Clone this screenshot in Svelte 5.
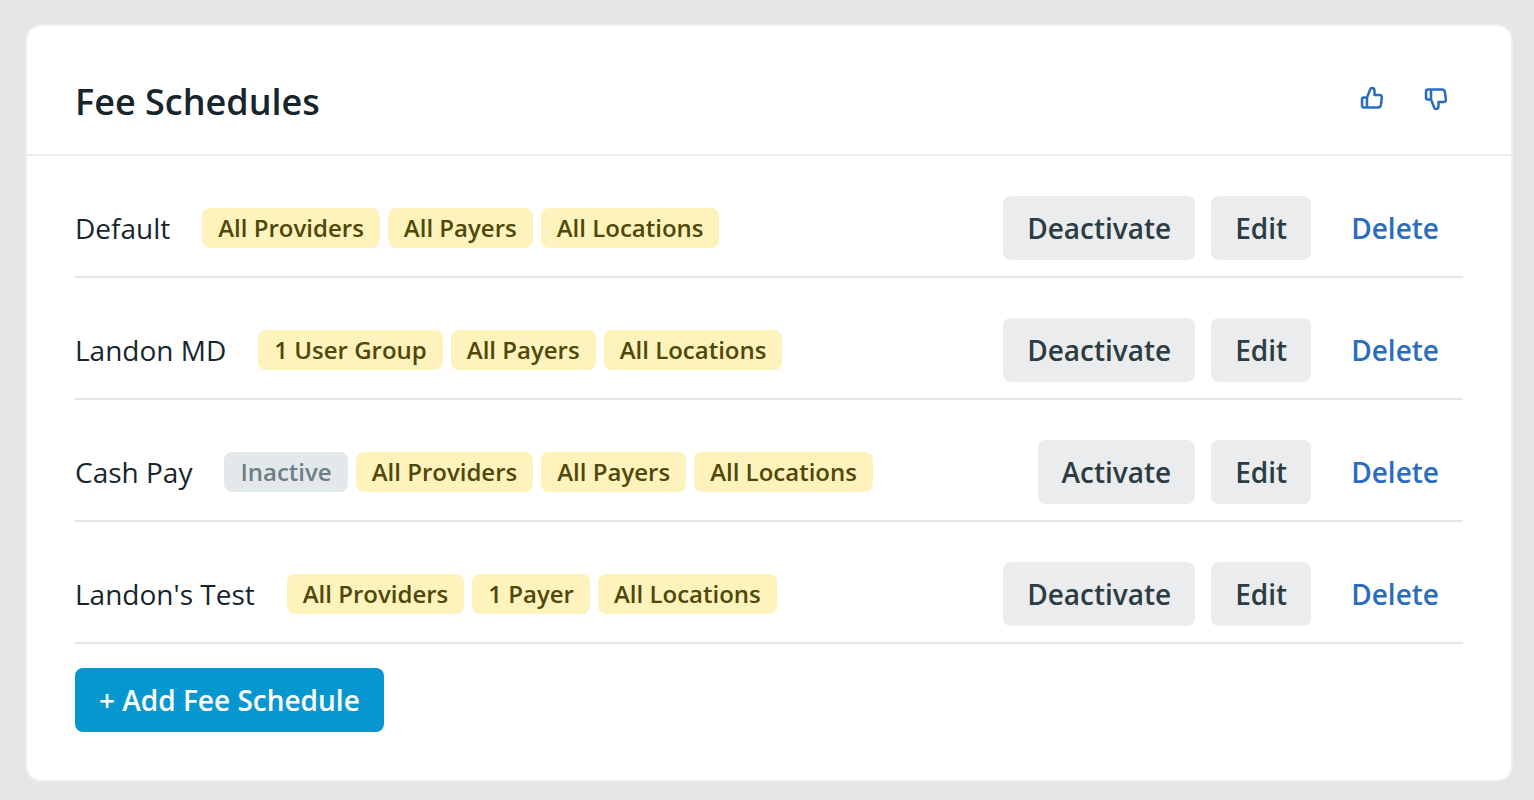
<script>
	const schedules = [
		{ name: 'Default', tags: ['All Providers', 'All Payers', 'All Locations'], active: true },
		{ name: 'Landon MD', tags: ['1 User Group', 'All Payers', 'All Locations'], active: true },
		{ name: 'Cash Pay', tags: ['All Providers', 'All Payers', 'All Locations'], active: false },
		{ name: "Landon's Test", tags: ['All Providers', '1 Payer', 'All Locations'], active: true }
	];
	const thumb = 'M7 11.5 10 4Q10.5 2 12 2 14.5 2 14.5 5V9H19.5Q22.2 9 21.8 12L20.9 19Q20.5 21.500 18 21.500H4Q2 21.500 2 19.500V13.500Q2 11.500 4 11.500H7V21.500';
</script>

<div class="page">
	<section class="card">
		<header class="card-header">
			<h1>Fee Schedules</h1>
			<div class="feedback">
				<button class="icon-btn" aria-label="Thumbs up">
					<svg width="24" height="24" viewBox="0 0 24 24" fill="none" stroke="currentColor" stroke-width="2.5" stroke-linejoin="round" stroke-linecap="round">
						<path d={thumb} />
					</svg>
				</button>
				<button class="icon-btn" aria-label="Thumbs down">
					<svg width="24" height="24" viewBox="0 0 24 24" fill="none" stroke="currentColor" stroke-width="2.5" stroke-linejoin="round" stroke-linecap="round">
						<path d={thumb} transform="matrix(1 0 0 -1 0 25)" />
					</svg>
				</button>
			</div>
		</header>
		<div class="card-body">
			{#each schedules as item}
				<div class="row">
					<span class="name">{item.name}</span>
					<div class="tags">
						{#if !item.active}
							<span class="tag inactive">Inactive</span>
						{/if}
						{#each item.tags as tag}
							<span class="tag">{tag}</span>
						{/each}
					</div>
					<div class="actions">
						<button class="btn">{item.active ? 'Deactivate' : 'Activate'}</button>
						<button class="btn">Edit</button>
						<button class="btn link">Delete</button>
					</div>
				</div>
			{/each}
			<button class="btn primary">+ Add Fee Schedule</button>
		</div>
	</section>
</div>

<style>
	:global(body) {
		background: #e6e6e6;
		font-family: "Open Sans", "Noto Sans", sans-serif;
	}

	.page {
		padding: 24px 21px 18px 25px;
		height: 800px;
		box-sizing: border-box;
		overflow: hidden;
	}

	.card {
		background: #fff;
		border: 2px solid #eeeeee;
		border-radius: 16px;
		height: 758px;
		box-sizing: border-box;
	}

	.card-header {
		display: flex;
		align-items: center;
		justify-content: space-between;
		height: 130px;
		padding: 22px 48px 0;
		border-bottom: 2px solid #ececec;
		box-sizing: border-box;
	}

	h1 {
		margin: 0;
		font-size: 36px;
		font-weight: 600;
		color: #17262d;
	}

	.feedback {
		display: flex;
		gap: 40px;
		color: #2a6dbf;
		margin-top: -6px;
		padding-right: 15px;
	}

	.icon-btn {
		display: block;
		padding: 0;
		border: 0;
		background: none;
		color: inherit;
		height: 24px;
	}

	.icon-btn svg {
		display: block;
		overflow: visible;
	}

	.card-body {
		padding: 0 48px;
	}

	.row {
		display: flex;
		align-items: center;
		gap: 32px;
		padding: 40px 0 16px;
		border-bottom: 2px solid #e6e6e6;
	}

	.name {
		font-size: 28px;
		color: #17262d;
	}

	.tags {
		display: flex;
		gap: 8px;
	}

	.tag {
		display: block;
		padding: 0 16px;
		height: 40px;
		line-height: 40px;
		border-radius: 8px;
		background: #fef3bd;
		color: #504808;
		font-size: 24px;
		font-weight: 600;
	}

	.tag.inactive {
		background: #e3e8ea;
		color: #6e7e86;
	}

	.actions {
		display: flex;
		gap: 16px;
		margin-left: auto;
	}

	.btn {
		height: 64px;
		padding: 0 24px;
		border: 0;
		border-radius: 8px;
		background: #ebecee;
		color: #2b3c43;
		font-family: inherit;
		font-size: 28px;
		font-weight: 600;
	}

	.btn.link {
		background: none;
		color: #2a6dbf;
	}

	.btn.primary {
		display: block;
		margin-top: 24px;
		background: #0797d0;
		color: #fff;
	}
</style>
